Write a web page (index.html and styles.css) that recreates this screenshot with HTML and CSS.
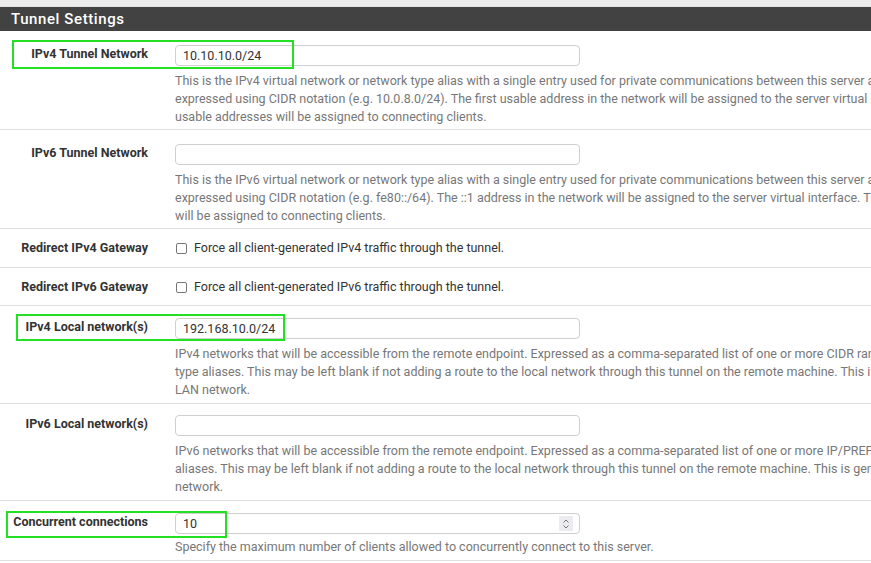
FILE: index.html
```html
<!DOCTYPE html>
<html>
<head>
<meta charset="utf-8">
<link rel="stylesheet" href="styles.css">
</head>
<body>
<div class="page">
  <div class="topstrip"></div>
  <div class="panel">
    <h2 class="panel-title">Tunnel Settings</h2>

    <div class="row">
      <div class="label">IPv4 Tunnel Network</div>
      <div class="field">
        <div class="input">10.10.10.0/24</div>
        <div class="help">
          <span>This is the IPv4 virtual network or network type alias with a single entry used for private communications between this server and client hosts</span>
          <span>expressed using CIDR notation (e.g. 10.0.8.0/24). The first usable address in the network will be assigned to the server virtual network interface. The remaining</span>
          <span>usable addresses will be assigned to connecting clients.</span>
        </div>
      </div>
    </div>

    <div class="row">
      <div class="label">IPv6 Tunnel Network</div>
      <div class="field">
        <div class="input"></div>
        <div class="help">
          <span>This is the IPv6 virtual network or network type alias with a single entry used for private communications between this server and client hosts</span>
          <span>expressed using CIDR notation (e.g. fe80::/64). The ::1 address in the network will be assigned to the server virtual interface. The remaining addresses</span>
          <span>will be assigned to connecting clients.</span>
        </div>
      </div>
    </div>

    <div class="row row-check">
      <div class="label">Redirect IPv4 Gateway</div>
      <div class="field check">
        <span class="box"></span>
        <span>Force all client-generated IPv4 traffic through the tunnel.</span>
      </div>
    </div>

    <div class="row row-check row-check-b">
      <div class="label">Redirect IPv6 Gateway</div>
      <div class="field check">
        <span class="box"></span>
        <span>Force all client-generated IPv6 traffic through the tunnel.</span>
      </div>
    </div>

    <div class="row row-mid">
      <div class="label">IPv4 Local network(s)</div>
      <div class="field">
        <div class="input">192.168.10.0/24</div>
        <div class="help">
          <span>IPv4 networks that will be accessible from the remote endpoint. Expressed as a comma-separated list of one or more CIDR ranges or host/network</span>
          <span>type aliases. This may be left blank if not adding a route to the local network through this tunnel on the remote machine. This is generally set to the</span>
          <span>LAN network.</span>
        </div>
      </div>
    </div>

    <div class="row row-tight">
      <div class="label">IPv6 Local network(s)</div>
      <div class="field">
        <div class="input"></div>
        <div class="help">
          <span>IPv6 networks that will be accessible from the remote endpoint. Expressed as a comma-separated list of one or more IP/PREFIX or host/network type</span>
          <span>aliases. This may be left blank if not adding a route to the local network through this tunnel on the remote machine. This is generally set to the LAN</span>
          <span>network.</span>
        </div>
      </div>
    </div>

    <div class="row row-last">
      <div class="label">Concurrent connections</div>
      <div class="field">
        <div class="input number">10
          <span class="spin">
            <svg width="8" height="12" viewBox="0 0 8 12"><path d="M1.5 4.5 L4 2 L6.5 4.5 M1.5 7.5 L4 10 L6.5 7.5" fill="none" stroke="#777" stroke-width="1"/></svg>
          </span>
        </div>
        <div class="help help-single">
          <span>Specify the maximum number of clients allowed to concurrently connect to this server.</span>
        </div>
      </div>
    </div>
  </div>

  <div class="mark mark1"></div>
  <div class="mark mark2"></div>
  <div class="mark mark3"></div>
</div>
</body>
</html>
```

FILE: styles.css
```css
* { box-sizing: border-box; }
html, body {
  margin: 0;
  padding: 0;
  background: #fff;
  overflow: hidden;
}
body {
  font-family: Roboto, "Liberation Sans", sans-serif;
  width: 871px;
  height: 563px;
}
.page {
  position: relative;
  width: 1200px;
}
.topstrip {
  height: 7px;
  background: #ececec;
  border-bottom: 1px solid #e2e2e2;
}
.panel-title {
  margin: 0;
  height: 24px;
  background: #424242;
  color: #fff;
  font-size: 15px;
  font-weight: 500;
  letter-spacing: 0.6px;
  line-height: 24px;
  padding-left: 11px;
}
.row {
  display: grid;
  grid-template-columns: 175px 1fr;
  border-bottom: 1px solid #e0e0e0;
  padding: 14px 0 3px;
}
.row-mid { padding: 12px 0 4px; }
.row-tight { padding: 11px 0 4px; }
.row-last { padding: 12px 0 4px; }
.label {
  text-align: right;
  padding-right: 27px;
  font-size: 12.5px;
  font-weight: 700;
  color: #333;
  line-height: 18px;
}
.field {
  display: flex;
  flex-direction: column;
}
.input {
  position: relative;
  width: 405px;
  height: 21px;
  border: 1px solid #cfcfcf;
  border-radius: 4px;
  font-size: 12.5px;
  color: #333;
  line-height: 19px;
  padding-left: 7px;
  background: #fff;
}
.help {
  display: flex;
  flex-direction: column;
  margin-top: 6px;
  font-size: 12.5px;
  line-height: 18px;
  color: #777;
  white-space: nowrap;
}
.help-single { margin-top: 4px; }
.row-check {
  padding: 10px 0 10px;
  align-items: center;
}
.row-check-b { padding: 10px 0 9px; }
.check {
  flex-direction: row;
  align-items: center;
  gap: 7px;
  font-size: 12.5px;
  line-height: 18px;
  color: #333;
  padding-left: 1px;
}
.box {
  width: 11px;
  height: 11px;
  border: 1px solid #777;
  border-radius: 2px;
  background: #fff;
}
.spin {
  position: absolute;
  right: 6px;
  top: 2px;
  width: 14px;
  height: 15px;
  background: #ececf0;
  display: flex;
  align-items: center;
  justify-content: center;
}
.mark {
  position: absolute;
  border: 2px solid #22e022;
}
.mark1 { left: 12px; top: 40px; width: 282px; height: 29px; }
.mark2 { left: 16px; top: 314px; width: 269px; height: 27px; }
.mark3 { left: 6px; top: 511px; width: 221px; height: 27px; }
```
